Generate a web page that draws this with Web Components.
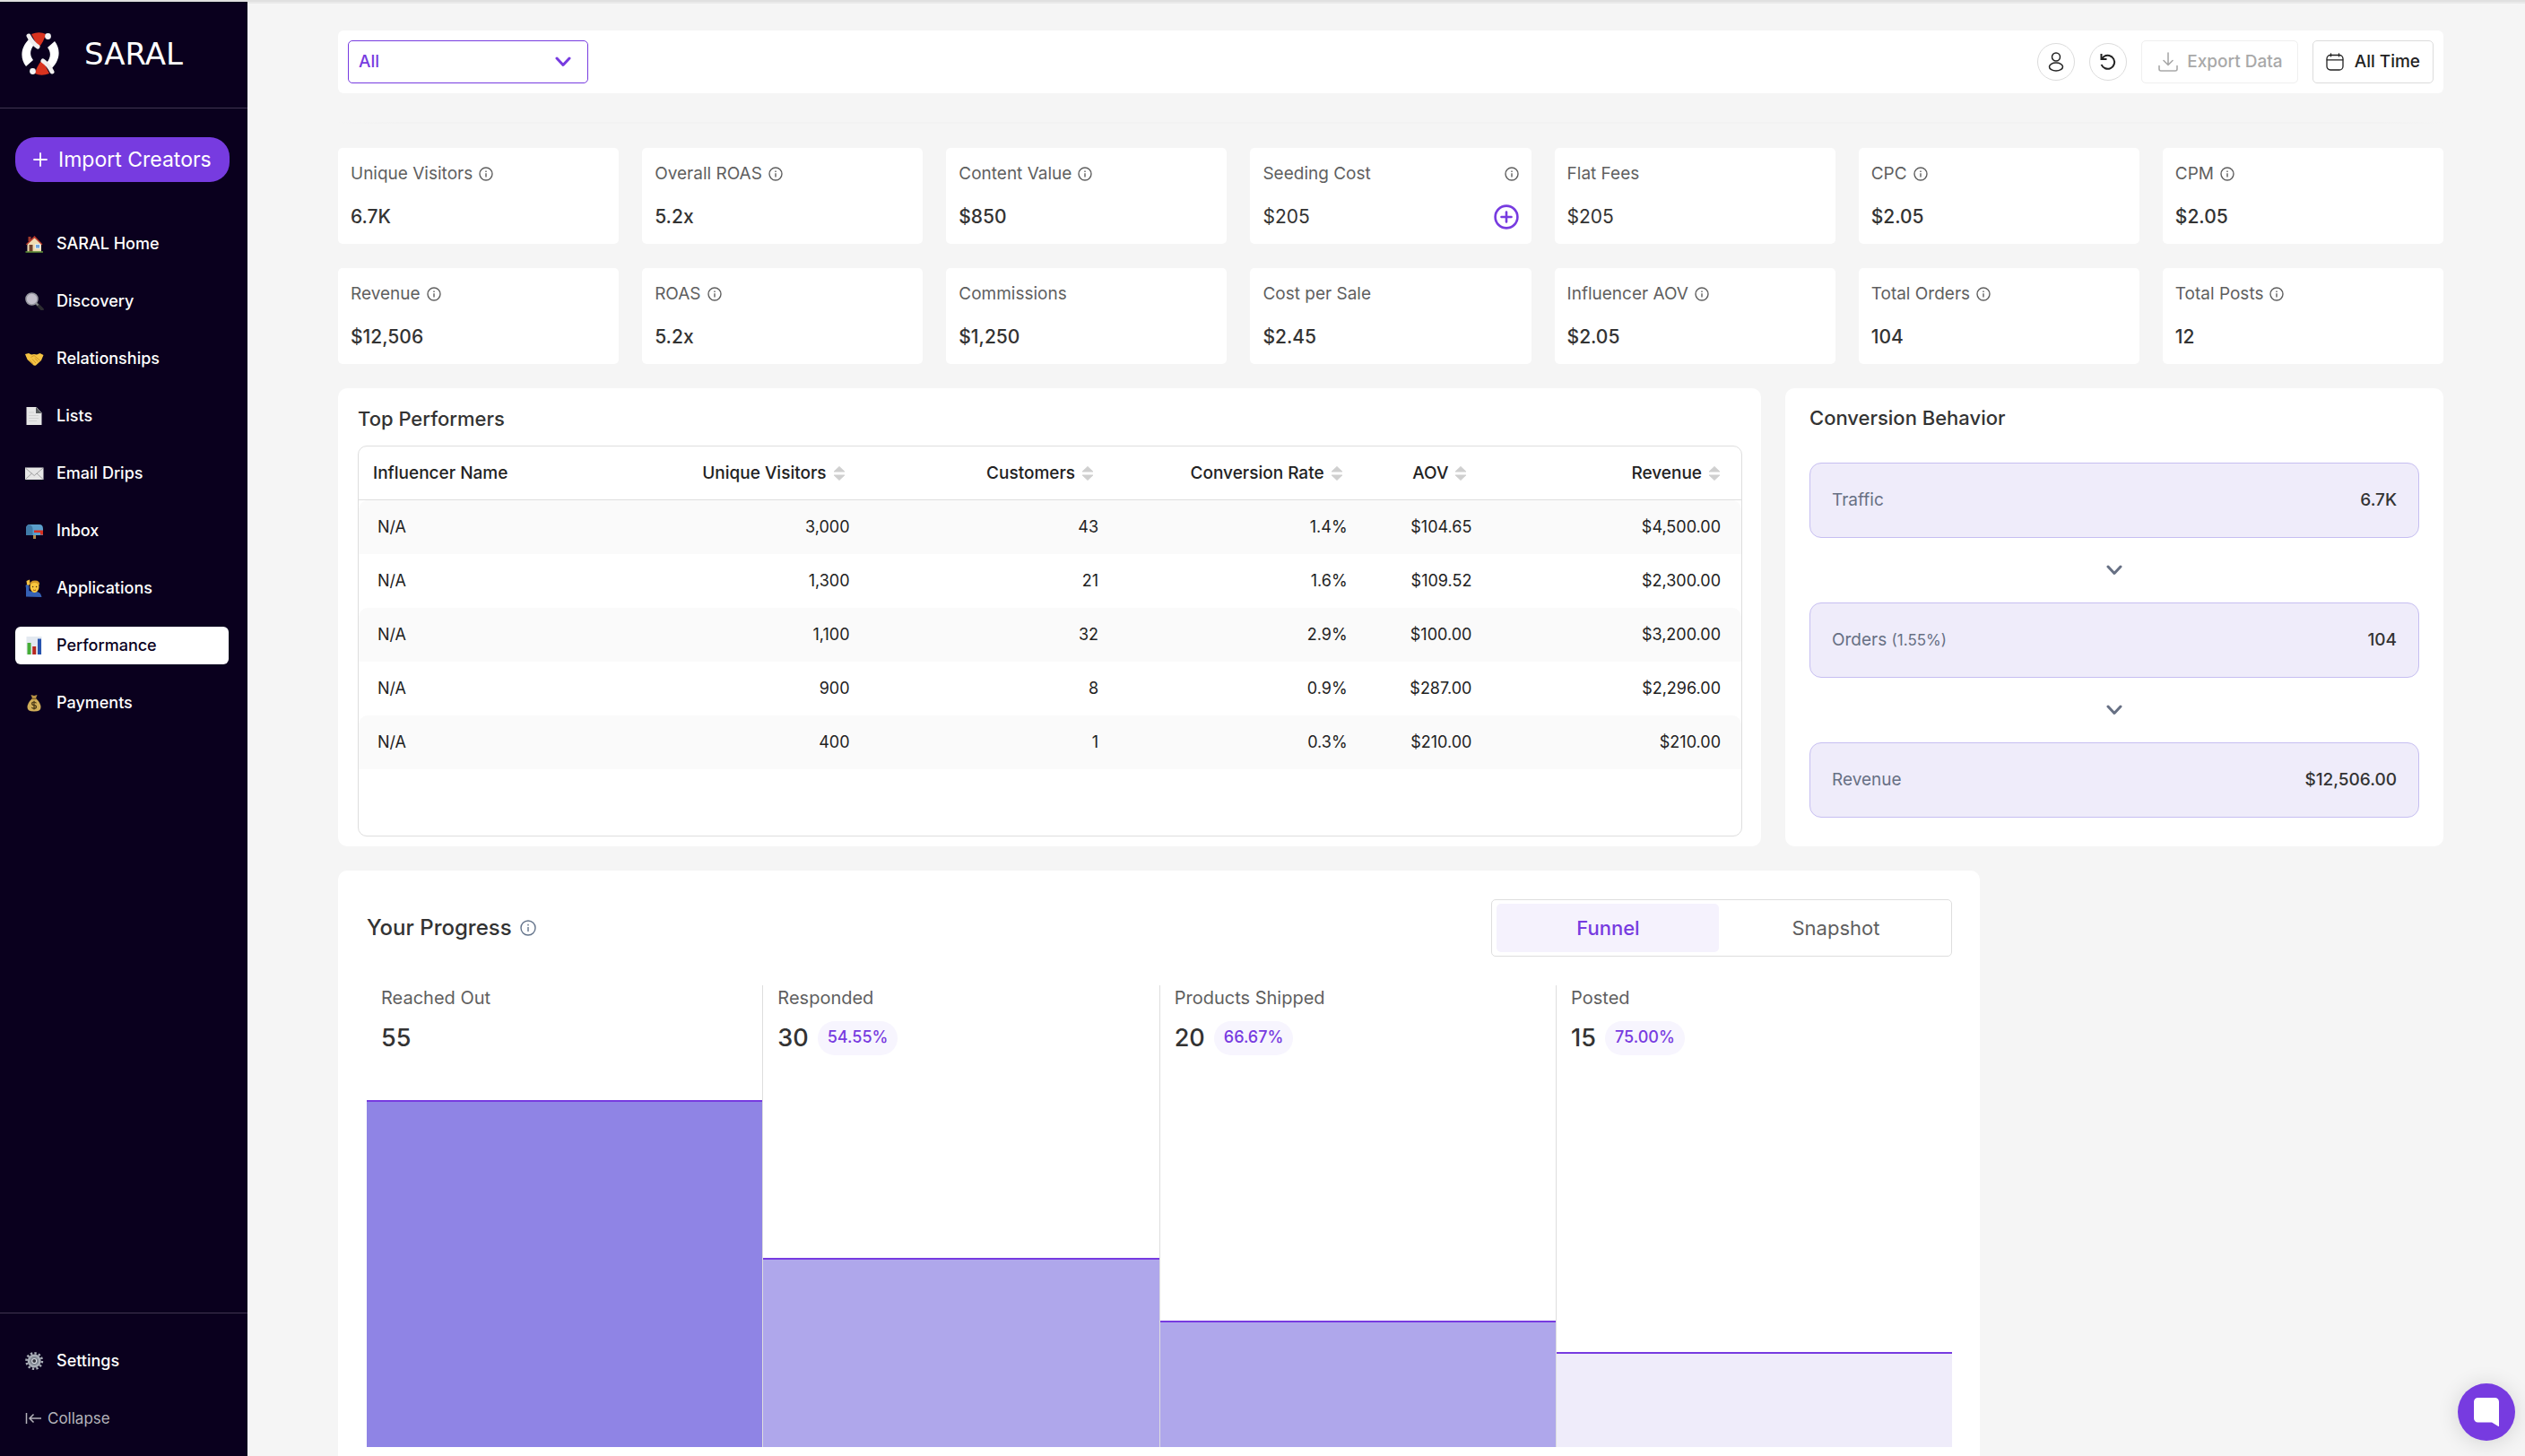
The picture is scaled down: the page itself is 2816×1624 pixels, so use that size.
<!DOCTYPE html>
<html lang="en">
<head>
<meta charset="utf-8">
<title>SARAL – Performance</title>
<style>
:root{--purple:#773be0;--ink:#333;--muted:#5f5f5f;--line:#dedede;--tint:#efecfa;--slate:#677084}
*{box-sizing:border-box}
body{margin:0;background:#f5f5f5;font-family:Inter,"Open Sans",sans-serif;font-size:18px;line-height:28px;color:var(--ink)}
</style>
</head>
<body>
<saral-app></saral-app>
<script>
const BASE = `*{box-sizing:border-box}svg{display:block;flex:none}button,select{font:inherit;color:inherit;margin:0;padding:0;background:none;border:0}a{color:inherit;text-decoration:none}h1,h2,p{margin:0;font:inherit}`;

const ICONS = {
  info:`<svg viewBox="0 0 16 16" width="16" height="16" fill="none" stroke="currentColor" stroke-width="1.4"><circle cx="8" cy="8" r="7"/><path d="M8 7.3v4.2M8 4.4v1.6"/></svg>`,
  infoBig:`<svg viewBox="0 0 18 18" width="18" height="18" fill="none" stroke="currentColor" stroke-width="1.4"><circle cx="9" cy="9" r="8"/><path d="M9 8v5M9 4.8v1.7"/></svg>`,
  chevron:`<svg viewBox="0 0 18 12" width="18" height="12" fill="none" stroke="currentColor" stroke-width="3" stroke-linecap="round" stroke-linejoin="round"><path d="M2 2l7 7.5L16 2"/></svg>`,
  plusCircle:`<svg viewBox="0 0 28 28" width="28" height="28" fill="none" stroke="currentColor" stroke-width="2.6" stroke-linecap="round"><circle cx="14" cy="14" r="12.4"/><path d="M14 8.5v11M8.500 14h11"/></svg>`,
  plus:`<svg viewBox="0 0 16 16" width="16" height="16" fill="none" stroke="currentColor" stroke-width="1.8" stroke-linecap="round"><path d="M8 1v14M1 8h14"/></svg>`,
  user:`<svg viewBox="0 0 18 22" width="18" height="22" fill="none" stroke="currentColor" stroke-width="1.5"><circle cx="9" cy="5.500" r="4.500"/><ellipse cx="9" cy="16.500" rx="7.500" ry="4.500"/></svg>`,
  undo:`<svg viewBox="0 0 20 20" width="20" height="20" fill="none" stroke="currentColor" stroke-width="2"><path d="M2.500 1v6h6"/><path d="M2.800 6.500L5.500 4A7.500 7.500 0 1 1 2.600 13"/></svg>`,
  download:`<svg viewBox="0 0 22 22" width="22" height="22" fill="none" stroke="currentColor" stroke-width="1.6" stroke-linecap="round" stroke-linejoin="round"><path d="M11 1v13M6 9.500l5 5 5-5M1 15.500V19a2 2 0 0 0 2 2h16a2 2 0 0 0 2-2v-3.500"/></svg>`,
  calendar:`<svg viewBox="0 0 20 20" width="20" height="20" fill="none" stroke="currentColor" stroke-width="1.3" stroke-linecap="round"><rect x="1" y="2.500" width="18" height="16.500" rx="4"/><path d="M1.300 7.800h17.400M5.500 .8v3M14.500 .8v3"/></svg>`,
  sort:`<svg viewBox="0 0 14 18" width="14" height="18" fill="#cfcfcf" stroke="#cfcfcf" stroke-linejoin="round"><path d="M7 1.500L12.800 7H1.200zM7 16.500L1.200 11h11.600z"/></svg>`,
  collapse:`<svg viewBox="0 0 18 14" width="18" height="14" fill="none" stroke="currentColor" stroke-width="1.500"><path d="M1.500 1v12M5 7h13M9.500 2.500L5 7l4.500 4.500"/></svg>`,
  chat:`<svg viewBox="0 0 28 32" width="28" height="32" fill="#fff"><path d="M4.500 0h19A4.500 4.500 0 0 1 28 4.500V31.500c0 .5-.5.6-1 .3L20 27.500H4.500A4.500 4.500 0 0 1 0 23V4.500A4.500 4.500 0 0 1 4.500 0z"/></svg>`,
  logo:`<svg viewBox="0 0 42 48" width="42" height="48"><path d="M8 8C-1 17 -2 29 5 38l8-7C9 26 9 20 14 14z" fill="#fff"/><path d="M34 40c9-9 10-21 3-30l-8 7c4 5 4 11-1 17z" fill="#fff"/><path d="M11 2q9-3.500 16 0-2 8-7 14l-3-2z" fill="#d9331f"/><path d="M31 46q-9 3.500-16 0 2-8 7-14l3 2z" fill="#d9331f"/><path d="M8 4q4 8 10 12" fill="none" stroke="#f1efef" stroke-width="5" stroke-linecap="round"/><path d="M34 44q-4-8-10-12" fill="none" stroke="#f1efef" stroke-width="5" stroke-linecap="round"/><circle cx="29.500" cy="4.500" r="3.400" fill="#f4f4f4"/><circle cx="12.500" cy="43.500" r="3.400" fill="#f4f4f4"/></svg>`
};

const EMOJI = {
  home:`<path d="M3.500 2h3v5h-3z" fill="#a03a2c"/><path d="M2.500 9.500L10.500 2.500l7.500 7v9.500h-15.500z" fill="#efdcb4"/><path d="M.8 10.500L10.500 1l9 9.500-1 .8-8-7.700-8.500 7.700z" fill="#b93a2b"/><path d="M4.500 11h4v8h-4z" fill="#70402c"/><path d="M11.500 10.500h5v4.500h-5z" fill="#6ea5dd" stroke="#fff" stroke-width=".7"/><path d="M.5 18.200h19.500v1.600H.5z" fill="#5e8f36"/>`,
  search:`<path d="M13 13l6 6" stroke="#2d2d31" stroke-width="3.600" stroke-linecap="round"/><path d="M11.500 11.500l3 3" stroke="#85868c" stroke-width="2"/><circle cx="7.500" cy="7.500" r="6.500" fill="#c3bfcb" stroke="#9798a0" stroke-width="1.600"/>`,
  hands:`<path d="M0 5l4-1 3 1.500L10 5l3 .5L16.500 4 20.500 6l-2.500 6-6 5.500q-2 .8-3.500-1L2.500 11z" fill="#f5c344"/><path d="M6.500 8.500L10 6.500l7 6M5 11.500l4 4.500M8 10.500l4 4.500M11 9.500l3.500 4" fill="none" stroke="#c98b20" stroke-width=".8"/>`,
  page:`<path d="M1.500 0h11l6 6.500V20h-17z" fill="#e6e6e6"/><path d="M12 0l6.500 7H12z" fill="#55585a"/><path d="M4 6h6M4 9.500h11M4 12.500h11M4 15.500h9" stroke="#cfcfcf" stroke-width=".9"/>`,
  mail:`<path d="M0 3.500h20.500v13.500H0z" fill="#e6e6e6"/><path d="M.4 4l9.800 8.500L20 4M.5 16.500l7-6.500M20 16.500l-7-6.500" fill="none" stroke="#9b9b9b" stroke-width=".9"/>`,
  inbox:`<path d="M9 13h3v6H9z" fill="#b08a4c"/><path d="M5 3h11q4 0 4 5v7H1V8q0-5 4-5z" fill="#5b9fcb"/><path d="M1 15V8q0-4.500 3.500-4.500T8.500 8v7z" fill="#3f7ba8"/><path d="M10 9.500h10v5h-3v-2.500h-7z" fill="#d92f20"/>`,
  person:`<path d="M1 19.500V10l-.5-3L3 5l1.500 3v5l4 1h4q5 0 6 6z" fill="#3561b5"/><path d="M2 6L1.500 2 5 .5 5.500 5 4 7z" fill="#f5c344"/><ellipse cx="10.500" cy="8.500" rx="5" ry="6.500" fill="#fac83f"/><path d="M5.200 7Q5 1.500 11 1.500T16 7q-2-3-5.500-3T5.200 7z" fill="#d39a26"/><circle cx="8.600" cy="8.500" r=".8" fill="#513411"/><circle cx="12.600" cy="8.500" r=".8" fill="#513411"/><path d="M9 12q1.500 1 3 0" stroke="#9a4a1a" fill="none"/>`,
  chart:`<path d="M1.500 0h17v20h-17z" fill="#e3e9f0"/><path d="M2.500 7h4v13h-4z" fill="#46ad37"/><path d="M8.200 11h4v9h-4z" fill="#b8281f"/><path d="M14 2.500h4V20h-4z" fill="#2753ae"/>`,
  money:`<path d="M6.500 1l3.500 1 3.500-1-1.500 4H8z" fill="#b99345"/><path d="M8 5h4q5.500 5 5.500 10 0 4.500-7.500 4.500T2.500 15Q2.500 10 8 5z" fill="#d1ae59"/><path d="M7.500 5.500h5" stroke="#7b5c20" stroke-width="1.200"/><path d="M12.500 10.300Q11.500 9 10 9q-2.300 0-2.300 1.700T10 12.600q2.500.3 2.500 2t-2.500 1.700q-1.700 0-2.700-1.300M10 7.800v9.700" fill="none" stroke="#453514" stroke-width="1.200"/>`,
  gear:`<circle cx="10.200" cy="10" r="8.700" fill="none" stroke="#a8adb6" stroke-width="2.600" stroke-dasharray="2.300 2.250"/><circle cx="10.200" cy="10" r="6.300" fill="#7e8590" stroke="#a8adb6" stroke-width="2.400"/><circle cx="10.200" cy="10" r="2.500" fill="#33353e" stroke="#d7dae0" stroke-width="1.200"/>`
};

class Base extends HTMLElement {
  connectedCallback() {
    if (this.shadowRoot) return;
    const t = document.createElement('template');
    t.innerHTML = `<style>${BASE}${this.css()}</style>${this.html()}`;
    this.attachShadow({mode:'open'}).append(t.content.cloneNode(true));
  }
  a(n) { return this.getAttribute(n) || ''; }
  css() { return ':host{display:block}'; }
  html() { return '<slot></slot>'; }
}
const define = (name, css, html) => customElements.define(name, class extends Base {
  css() { return css; }
  html() { return html(this); }
});

define('app-icon', ':host{display:inline-flex;flex:none}', e => ICONS[e.a('name')] ||
  `<svg viewBox="0 0 21 20" width="21" height="20">${EMOJI[e.a('name')]}</svg>`);

define('nav-item', `:host{display:block}
  a{display:flex;align-items:center;gap:14px;height:42px;padding:0 11px;border-radius:6px;color:#fff;font-size:18px;font-weight:500}
  :host([active]) a{background:#fff;color:#0a001e}
  :host([quiet]) a{gap:7px;color:#b5b3ba;font-size:17px;font-weight:400}`,
  e => `<a href="#"><app-icon name="${e.a('icon')}"></app-icon><slot></slot></a>`);

define('side-bar', `:host{display:flex;flex-direction:column;background:#0a001e;color:#fff}
  header{display:flex;align-items:center;gap:28px;height:119px;padding:0 24px 2px;border-bottom:1px solid #3f3650}
  .brand{font:500 34px/40px "DejaVu Sans",sans-serif}
  button{display:flex;align-items:center;gap:12px;height:50px;margin:32px 20px 0 17px;padding:0 20px;border-radius:22px;background:var(--purple);font-size:23px;white-space:nowrap}
  nav{display:flex;flex-direction:column;gap:22px;padding:0 21px 0 17px}
  .main{margin-top:48px;flex:1}
  footer{border-top:1px solid #3f3650;padding:32px 0 21px}`,
  () => `<header><app-icon name="logo"></app-icon><span class="brand">SARAL</span></header>
  <button type="button"><app-icon name="plus"></app-icon>Import Creators</button>
  <nav class="main" aria-label="Main">
   <nav-item icon="home">SARAL Home</nav-item><nav-item icon="search">Discovery</nav-item><nav-item icon="hands">Relationships</nav-item>
   <nav-item icon="page">Lists</nav-item><nav-item icon="mail">Email Drips</nav-item><nav-item icon="inbox">Inbox</nav-item>
   <nav-item icon="person">Applications</nav-item><nav-item icon="chart" active>Performance</nav-item><nav-item icon="money">Payments</nav-item>
  </nav>
  <footer><nav aria-label="Account"><nav-item icon="gear">Settings</nav-item><nav-item icon="collapse" quiet>Collapse</nav-item></nav></footer>`);

define('tool-bar', `:host{display:flex;align-items:center;justify-content:space-between;height:70px;padding:0 11px;background:#fff;border-radius:6px}
  .pick{display:grid;align-items:center;width:268px;height:48px;color:var(--purple)}
  .pick>*{grid-area:1/1}
  select{appearance:none;width:100%;height:48px;padding:0 11px;border:1px solid var(--purple);border-radius:5px;font-size:19px;font-weight:500}
  .pick app-icon{justify-self:end;margin-right:19px;pointer-events:none}
  .tools{display:flex;align-items:center;gap:16px;font-size:19px;font-weight:500;color:#222}
  button{display:flex;align-items:center;justify-content:center;height:48px;border:1px solid #dcdcdc;border-radius:5px}
  .round{width:42px;height:42px;border-radius:50%}
  .export{gap:10px;padding:0 16px 0 18px;color:#a9a9a9;border-color:#efefef}
  .time{gap:12px;padding:0 14px}`,
  () => `<div class="pick"><select aria-label="Campaign"><option>All</option></select><app-icon name="chevron"></app-icon></div>
  <div class="tools"><button type="button" class="round" aria-label="Profile"><app-icon name="user"></app-icon></button>
  <button type="button" class="round" aria-label="Reset"><app-icon name="undo"></app-icon></button>
  <button type="button" class="export" disabled><app-icon name="download"></app-icon>Export Data</button>
  <button type="button" class="time"><app-icon name="calendar"></app-icon>All Time</button></div>`);

define('stat-card', `:host{display:flex;flex-direction:column;gap:20px;height:107px;padding:15px 14px;background:#fff;border-radius:5px}
  .label,.value{display:flex;align-items:center;height:28px}
  .label{gap:7px;font-size:19px;color:var(--muted)}
  .value{font-size:21px;font-weight:500;justify-content:space-between}
  :host([light]) .value{font-weight:400}
  :host([editable]) .label{justify-content:space-between}
  button{display:flex;color:var(--purple)}`,
  e => `<div class="label">${e.a('label')}${e.hasAttribute('info') ? '<app-icon name="info"></app-icon>' : ''}</div>
  <div class="value">${e.a('value')}${e.hasAttribute('editable') ? '<button type="button" aria-label="Add"><app-icon name="plusCircle"></app-icon></button>' : ''}</div>`);

const ROWS = [['N/A','3,000','43','1.4%','$104.65','$4,500.00'],['N/A','1,300','21','1.6%','$109.52','$2,300.00'],['N/A','1,100','32','2.9%','$100.00','$3,200.00'],['N/A','900','8','0.9%','$287.00','$2,296.00'],['N/A','400','1','0.3%','$210.00','$210.00']];
define('top-performers', `:host{display:flex;flex-direction:column;gap:16px;padding:20px 21px 11px 22px;background:#fff;border-radius:10px}
  h2{font-size:22px;font-weight:500}
  .box{flex:1;border:1px solid var(--line);border-radius:10px;overflow:hidden}
  table{width:100%;table-layout:fixed;border-collapse:separate;border-spacing:0;color:#222}
  .name{width:19%}.aov{width:9%}.wide{width:18%}
  th{height:60px;padding:0 28px 0 0;font-size:19px;font-weight:500;border-bottom:1px solid var(--line);text-align:right;white-space:nowrap}
  th:first-child{padding-left:16px;text-align:left}
  th:last-child{padding-right:23px}
  th button{display:inline-flex;align-items:center;gap:7px;font:inherit;vertical-align:middle}
  td{height:60px;padding:0 23px 0 0;text-align:right;font-size:18px}
  td:first-child{padding-left:21px;text-align:left;border-radius:10px 0 0 0}
  td:last-child{border-radius:0 10px 0 0}
  tbody tr:nth-child(odd) td{background:#fafafa}`,
  () => `<h2>Top Performers</h2><div class="box"><table><colgroup><col class="name"><col class="wide"><col class="wide"><col class="wide"><col class="aov"><col class="wide"></colgroup><thead><tr><th scope="col">Influencer Name</th>${['Unique Visitors','Customers','Conversion Rate','AOV','Revenue'].map(h => `<th scope="col"><button type="button">${h}<app-icon name="sort"></app-icon></button></th>`).join('')}</tr></thead>
  <tbody>${ROWS.map(r => `<tr>${r.map(c => `<td>${c}</td>`).join('')}</tr>`).join('')}</tbody></table></div>`);

define('flow-step', `:host{display:flex;align-items:center;justify-content:space-between;height:84px;padding:0 24px;background:var(--tint);border:1px solid #c6bef1;border-radius:13px;font-size:19px;font-weight:500;color:var(--ink)}
  span{font-weight:400;color:var(--slate)}`,
  e => `<span><slot></slot></span>${e.a('value')}`);
define('conversion-behavior', `:host{display:flex;flex-direction:column;padding:19px 27px 32px;background:#fff;border-radius:10px}
  h2{font-size:22px;font-weight:500;margin-bottom:36px}
  .arrow{display:flex;align-items:center;justify-content:center;height:72px;color:var(--slate)}
  small{font-size:17px}`,
  () => `<h2>Conversion Behavior</h2><flow-step value="6.7K">Traffic</flow-step><div class="arrow"><app-icon name="chevron"></app-icon></div>
  <flow-step value="104">Orders <small>(1.55%)</small></flow-step><div class="arrow"><app-icon name="chevron"></app-icon></div><flow-step value="$12,506.00">Revenue</flow-step>`);

define('funnel-stage', `:host{display:flex;flex-direction:column;flex:1;border-right:1px solid var(--line)}
  :host(:last-child){border-right:0}
  .head{display:flex;flex-direction:column;gap:12px;height:128px;padding:0 16px}
  .label{font-size:20px;color:var(--muted)}
  .num{display:flex;align-items:center;gap:10px;height:38px;font-size:27px;font-weight:500}
  .badge{height:38px;padding:0 11px;border-radius:19px;background:#f7f5fe;color:var(--purple);font-size:18px;line-height:36px}
  .plot{display:flex;align-items:flex-end;height:387px}
  .bar{flex:1;border-top:2px solid var(--purple)}`,
  e => `<div class="head"><div class="label">${e.a('label')}</div><div class="num">${e.a('value')}${e.a('rate') ? `<span class="badge">${e.a('rate')}</span>` : ''}</div></div>
  <div class="plot"><div class="bar" style="height:${e.a('value') / 55 * 100}%;background:${e.a('fill')}"></div></div>`);
define('your-progress', `:host{display:block;width:78%;padding:32px 31px 40px 32px;background:#fff;border-radius:10px}
  header{display:flex;align-items:center;justify-content:space-between;margin-bottom:32px}
  h2{display:flex;align-items:center;gap:9px;font-size:24px;font-weight:500}
  h2 app-icon{color:#64748b}
  .tabs{display:grid;grid-template-columns:1fr 1fr;gap:6px;width:514px;height:64px;padding:4px 5px;border:1px solid var(--line);border-radius:5px}
  .tabs button{font-size:22px;color:var(--muted);border-radius:5px}
  .tabs button[aria-selected=true]{background:#f5f2fd;color:var(--purple);font-weight:500}
  .funnel{display:flex}`,
  () => `<header><h2>Your Progress<app-icon name="infoBig"></app-icon></h2><div class="tabs" role="tablist"><button type="button" role="tab" aria-selected="true">Funnel</button><button type="button" role="tab" aria-selected="false">Snapshot</button></div></header>
  <div class="funnel"><funnel-stage label="Reached Out" value="55" fill="#8f84e5"></funnel-stage><funnel-stage label="Responded" value="30" rate="54.55%" fill="#afa7eb"></funnel-stage><funnel-stage label="Products Shipped" value="20" rate="66.67%" fill="#afa7eb"></funnel-stage><funnel-stage label="Posted" value="15" rate="75.00%" fill="#efecfa"></funnel-stage></div>`);

const STATS = [['Unique Visitors','6.7K','info'],['Overall ROAS','5.2x','info'],['Content Value','$850','info'],['Seeding Cost','$205','info editable light'],['Flat Fees','$205','light'],['CPC','$2.05','info'],['CPM','$2.05','info'],['Revenue','$12,506','info'],['ROAS','5.2x','info'],['Commissions','$1,250',''],['Cost per Sale','$2.45',''],['Influencer AOV','$2.05','info'],['Total Orders','104','info'],['Total Posts','12','info']];
define('saral-app', `:host{display:grid;grid-template-columns:276px 1fr;height:100vh;border-top:2px solid #e0e0e0;overflow:hidden}
  main{display:flex;flex-direction:column;gap:27px;min-width:0;padding:30px 91px 0 101px;border-top:2px solid #e9e9e9;overflow-y:auto;scrollbar-width:none}
  main>*{flex:none}
  hr{width:100%;height:2px;margin:5px 0 0;border:0;background:linear-gradient(90deg,transparent,#f2f2f2 3%,#f2f2f2 97%,transparent)}
  .stats{display:grid;grid-template-columns:repeat(7,1fr);gap:27px 26px}
  .panels{display:grid;grid-template-columns:80fr 37fr;gap:27px;min-height:511px}
  .chat{position:fixed;right:11px;bottom:17px;display:flex;align-items:center;justify-content:center;width:64px;height:64px;border-radius:50%;background:var(--purple);box-shadow:0 2px 24px rgba(0,0,0,.14)}`,
  () => `<side-bar></side-bar><main><tool-bar></tool-bar><hr>
  <div class="stats">${STATS.map(([l, v, f]) => `<stat-card label="${l}" value="${v}" ${f}></stat-card>`).join('')}</div>
  <div class="panels"><top-performers></top-performers><conversion-behavior></conversion-behavior></div>
  <your-progress></your-progress></main><button class="chat" type="button" aria-label="Open chat"><app-icon name="chat"></app-icon></button>`);
</script>
</body>
</html>
